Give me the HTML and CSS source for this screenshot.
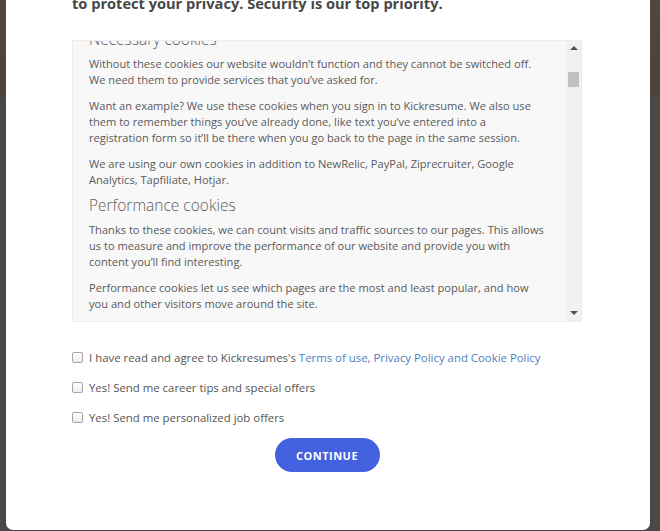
FILE: index.html
```html
<!DOCTYPE html>
<html lang="en">
<head>
<meta charset="utf-8">
<title>Cookie consent</title>
<link rel="stylesheet" href="styles.css">
</head>
<body>
<div class="page">
  <div class="modal">
    <h2 class="title">to protect your privacy. Security is our top priority.</h2>
    <div class="policy">
      <div class="policy-text">
        <div class="policy-inner">
          <h3>Necessary cookies</h3>
          <p>Without these cookies our website wouldn’t function and they cannot be switched off. We need them to provide services that you’ve asked for.</p>
          <p>Want an example? We use these cookies when you sign in to Kickresume. We also use them to remember things you’ve already done, like text you’ve entered into a registration form so it’ll be there when you go back to the page in the same session.</p>
          <p>We are using our own cookies in addition to NewRelic, PayPal, Ziprecruiter, Google Analytics, Tapfiliate, Hotjar.</p>
          <h3>Performance cookies</h3>
          <p>Thanks to these cookies, we can count visits and traffic sources to our pages. This allows us to measure and improve the performance of our website and provide you with content you’ll find interesting.</p>
          <p>Performance cookies let us see which pages are the most and least popular, and how you and other visitors move around the site.</p>
        </div>
      </div>
      <div class="scrollbar">
        <span class="arrow up"></span>
        <div class="track"><span class="thumb"></span></div>
        <span class="arrow down"></span>
      </div>
    </div>
    <div class="checks">
      <label class="check"><input type="checkbox"><span>I have read and agree to Kickresumes's <a href="#">Terms of use, Privacy Policy and Cookie Policy</a></span></label>
      <label class="check"><input type="checkbox"><span>Yes! Send me career tips and special offers</span></label>
      <label class="check"><input type="checkbox"><span>Yes! Send me personalized job offers</span></label>
    </div>
    <div class="actions">
      <button class="continue" type="button">CONTINUE</button>
    </div>
  </div>
</div>
</body>
</html>
```

FILE: styles.css
```css
html, body {
  margin: 0;
  padding: 0;
}
body {
  background: #4a4945;
  font-family: "Open Sans", "Liberation Sans", sans-serif;
  overflow: hidden;
  height: 531px;
}
.page {
  height: 531px;
  background: linear-gradient(180deg, #4f463e 0px, #4d443c 100px, #4a4945 110px, #4a4945 100%);
}
.modal {
  margin: -9px 10px 0 6px;
  padding: 0 68px 58px 66px;
  background: #ffffff;
  border-radius: 0 0 7px 7px;
}
.title {
  margin: 0;
  font-size: 14.6px;
  line-height: 24px;
  font-weight: 700;
  color: #474747;
}
.policy {
  margin-top: 25px;
  height: 280px;
  border: 1px solid #ededed;
  background: #f8f8f8;
  display: flex;
}
.policy-text {
  flex: 1;
  overflow: hidden;
  padding: 0 21px 0 16px;
}
.policy-inner {
  margin-top: -13px;
}
.policy h3 {
  margin: -4px 0 6px;
  font-size: 15.5px;
  line-height: 22px;
  font-weight: 300;
  color: #5d5d5d;
}
.policy p {
  margin: 0 0 10px;
  font-size: 11.1px;
  line-height: 16px;
  color: #5a5a5a;
}
.scrollbar {
  width: 15px;
  background: #f1f1f1;
  display: flex;
  flex-direction: column;
  align-items: center;
}
.arrow {
  width: 0;
  height: 0;
  border-left: 4px solid transparent;
  border-right: 4px solid transparent;
}
.arrow.up {
  margin-top: 5px;
  border-bottom: 4px solid #505050;
}
.arrow.down {
  margin-bottom: 6px;
  border-top: 4px solid #505050;
}
.track {
  flex: 1;
  width: 100%;
  display: flex;
  justify-content: center;
}
.thumb {
  margin-top: 22px;
  width: 11px;
  height: 15px;
  background: #c1c1c1;
}
.checks {
  margin-top: 26px;
  display: flex;
  flex-direction: column;
  gap: 12px;
}
.check {
  display: flex;
  align-items: center;
  height: 18px;
  font-size: 11.4px;
  color: #555555;
}
.check input {
  appearance: none;
  -webkit-appearance: none;
  margin: 0 6px 0 0;
  width: 11px;
  height: 11px;
  border: 1px solid #a6a6a6;
  border-radius: 2px;
  background: linear-gradient(180deg, #ffffff, #ededed);
}
.check a {
  color: #4f7ec0;
  text-decoration: none;
}
.actions {
  margin-top: 12px;
  display: flex;
  justify-content: center;
}
.continue {
  width: 105px;
  height: 34px;
  border: 0;
  border-radius: 17px;
  background: #4461df;
  color: #ffffff;
  font-family: "Open Sans", "Liberation Sans", sans-serif;
  font-weight: 700;
  font-size: 11px;
  letter-spacing: 0.5px;
  padding: 0;
}
```
